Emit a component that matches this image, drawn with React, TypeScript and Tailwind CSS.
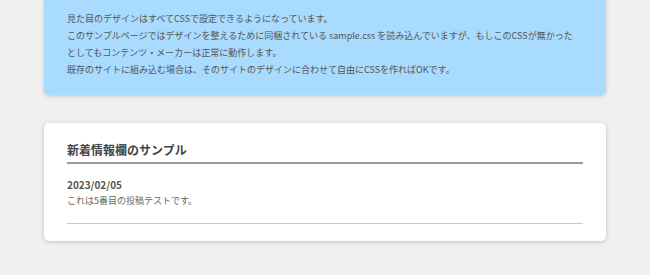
import React from "react";

const App: React.FC = () => {
  return (
    <div className="min-h-screen bg-[#f0f0f0] px-[44px] font-['Noto_Sans_CJK_JP','Noto_Sans',sans-serif] text-[#555]">
      <div className="rounded-b-[5px] bg-[#a8dbfe] px-[23px] pt-[10px] pb-[17px] text-[9px] leading-[17px] shadow-[0_1px_4px_rgba(0,0,0,0.18)] whitespace-nowrap">
        <p>見た目のデザインはすべてCSSで設定できるようになっています。</p>
        <p>
          このサンプルページではデザインを整えるために同梱されている sample.css を読み込んでいますが、もしこのCSSが無かった
          <br />
          としてもコンテンツ・メーカーは正常に動作します。
        </p>
        <p>既存のサイトに組み込む場合は、そのサイトのデザインに合わせて自由にCSSを作ればOKです。</p>
      </div>

      <div className="mt-[28px] rounded-[5px] bg-white px-[23px] pt-[18px] pb-[17px] shadow-[0_1px_4px_rgba(0,0,0,0.2)]">
        <h2 className="border-b-2 border-[#9a9a9a] pb-[3px] text-[12px] leading-[18px] font-semibold text-[#444]">
          新着情報欄のサンプル
        </h2>
        <div className="border-b border-[#c8c8c8] pt-[13px] pb-[14px]">
          <div className="text-[10px] leading-[15px] font-bold text-[#555]">2023/02/05</div>
          <div className="text-[9px] leading-[17px] text-[#666]">これは5番目の投稿テストです。</div>
        </div>
      </div>
    </div>
  );
};

export default App;
